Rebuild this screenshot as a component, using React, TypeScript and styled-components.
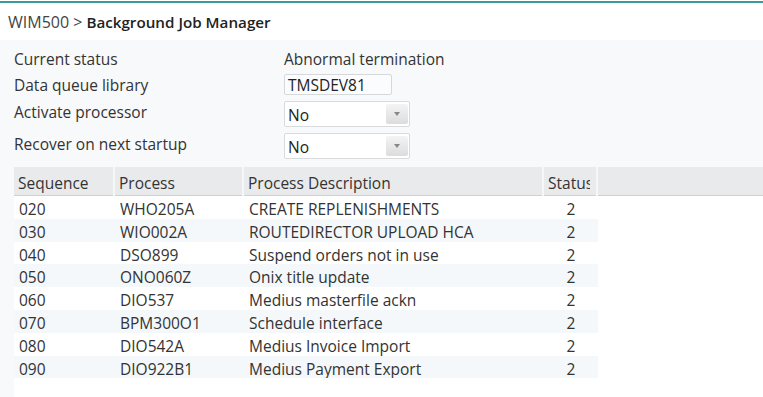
import styled, { createGlobalStyle } from "styled-components";

type Job = {
  sequence: string;
  process: string;
  description: string;
  status: string;
};

const jobs: Job[] = [
  { sequence: "020", process: "WHO205A", description: "CREATE REPLENISHMENTS", status: "2" },
  { sequence: "030", process: "WIO002A", description: "ROUTEDIRECTOR UPLOAD HCA", status: "2" },
  { sequence: "040", process: "DSO899", description: "Suspend orders not in use", status: "2" },
  { sequence: "050", process: "ONO060Z", description: "Onix title update", status: "2" },
  { sequence: "060", process: "DIO537", description: "Medius masterfile ackn", status: "2" },
  { sequence: "070", process: "BPM300O1", description: "Schedule interface", status: "2" },
  { sequence: "080", process: "DIO542A", description: "Medius Invoice Import", status: "2" },
  { sequence: "090", process: "DIO922B1", description: "Medius Payment Export", status: "2" },
];

const COLUMNS = "101px 129px 300px 54px";

const GlobalStyle = createGlobalStyle`
  html, body {
    margin: 0;
    padding: 0;
    background: #ffffff;
  }
  body {
    font-family: "Open Sans", "Liberation Sans", sans-serif;
    color: #333333;
  }
`;

const Page = styled.div`
  height: 397px;
  display: flex;
  flex-direction: column;
  overflow: hidden;
`;

const TopBar = styled.header`
  margin-top: 1px;
  border-top: 2px solid #3a9a9b;
  height: 37px;
  display: flex;
  align-items: center;
  padding-left: 8px;
  font-size: 15px;
  color: #444;
  background: #ffffff;
`;

const Crumb = styled.span`
  font-size: 16px;
  color: #444;
`;

const Title = styled.span`
  font-size: 15.2px;
  font-weight: 600;
  color: #222;
  margin-left: 4px;
`;

const Content = styled.main`
  flex: 1;
  background: #f8f9fb;
  padding: 8px 0 0 14px;
  display: flex;
  flex-direction: column;
`;

const Form = styled.div`
  display: flex;
  flex-direction: column;
`;

const FormRow = styled.div<{ $height: number; $gap: number }>`
  display: grid;
  grid-template-columns: 270px auto;
  height: ${(p) => p.$height}px;
  margin-top: ${(p) => p.$gap}px;
  font-size: 15.5px;
`;

const Label = styled.div`
  line-height: 22px;
  color: #333;
`;

const Value = styled.div`
  line-height: 22px;
  color: #333;
`;

const TextBox = styled.div`
  box-sizing: border-box;
  width: 108px;
  height: 21px;
  border: 1px solid #d6d9dc;
  border-radius: 2px;
  background: #fbfcfd;
  padding-left: 3px;
  line-height: 20px;
  color: #222;
`;

const Select = styled.div`
  box-sizing: border-box;
  width: 126px;
  height: 26px;
  border: 1px solid #d9dcdf;
  border-radius: 2px;
  background: #ffffff;
  display: flex;
  align-items: stretch;
`;

const SelectText = styled.span`
  flex: 1;
  padding-left: 3px;
  line-height: 26px;
  color: #222;
`;

const SelectArrow = styled.span`
  width: 22px;
  margin: 2px 1px 2px 0;
  border-radius: 2px;
  background: linear-gradient(#f4f4f4, #dcdcdc);
  display: flex;
  align-items: center;
  justify-content: center;

  &::after {
    content: "";
    border-left: 3px solid transparent;
    border-right: 3px solid transparent;
    border-top: 4px solid #888;
  }
`;

const Table = styled.div`
  margin-top: 8px;
  flex: 1;
  display: flex;
  flex-direction: column;
  background: #ffffff;
  font-size: 15.5px;
`;

const HeaderRow = styled.div`
  display: grid;
  grid-template-columns: ${COLUMNS} 1fr;
  height: 28px;
  background: #e9eaeb;
  border-bottom: 1px solid #cfd1d3;
`;

const HeaderCell = styled.div`
  padding: 0 6px 0 4px;
  line-height: 33px;
  color: #333;
  border-right: 2px solid #f6f7f8;
  min-width: 0;

  &:last-child {
    border-right: none;
  }
`;

const HeaderLabel = styled.span`
  display: block;
  overflow: hidden;
  white-space: nowrap;
`;

const BodyRow = styled.div<{ $striped: boolean }>`
  display: grid;
  grid-template-columns: ${COLUMNS};
  width: 584px;
  height: 22.8px;
  background: ${(p) => (p.$striped ? "#f4f8fa" : "#ffffff")};
`;

const Cell = styled.div<{ $center?: boolean }>`
  padding-left: ${(p) => (p.$center ? 0 : 5)}px;
  padding-top: 3px;
  text-align: ${(p) => (p.$center ? "center" : "left")};
  line-height: 21px;
  color: #333;
  white-space: nowrap;
  overflow: hidden;
`;

const headers = ["Sequence", "Process", "Process Description", "Status", ""];

export default function App() {
  return (
    <>
      <GlobalStyle />
      <Page>
        <TopBar>
          <Crumb>WIM500 &gt;</Crumb>
          <Title>Background Job Manager</Title>
        </TopBar>
        <Content>
          <Form>
            <FormRow $height={22} $gap={0}>
              <Label>Current status</Label>
              <Value>Abnormal termination</Value>
            </FormRow>
            <FormRow $height={22} $gap={4}>
              <Label>Data queue library</Label>
              <TextBox>TMSDEV81</TextBox>
            </FormRow>
            <FormRow $height={26} $gap={5}>
              <Label>Activate processor</Label>
              <Select>
                <SelectText>No</SelectText>
                <SelectArrow />
              </Select>
            </FormRow>
            <FormRow $height={26} $gap={6}>
              <Label>Recover on next startup</Label>
              <Select>
                <SelectText>No</SelectText>
                <SelectArrow />
              </Select>
            </FormRow>
          </Form>
          <Table>
            <HeaderRow>
              {headers.map((h, i) => (
                <HeaderCell key={i}>
                  <HeaderLabel>{h}</HeaderLabel>
                </HeaderCell>
              ))}
            </HeaderRow>
            {jobs.map((job, i) => (
              <BodyRow key={job.sequence} $striped={i % 2 === 1}>
                <Cell>{job.sequence}</Cell>
                <Cell>{job.process}</Cell>
                <Cell>{job.description}</Cell>
                <Cell $center>{job.status}</Cell>
              </BodyRow>
            ))}
          </Table>
        </Content>
      </Page>
    </>
  );
}
